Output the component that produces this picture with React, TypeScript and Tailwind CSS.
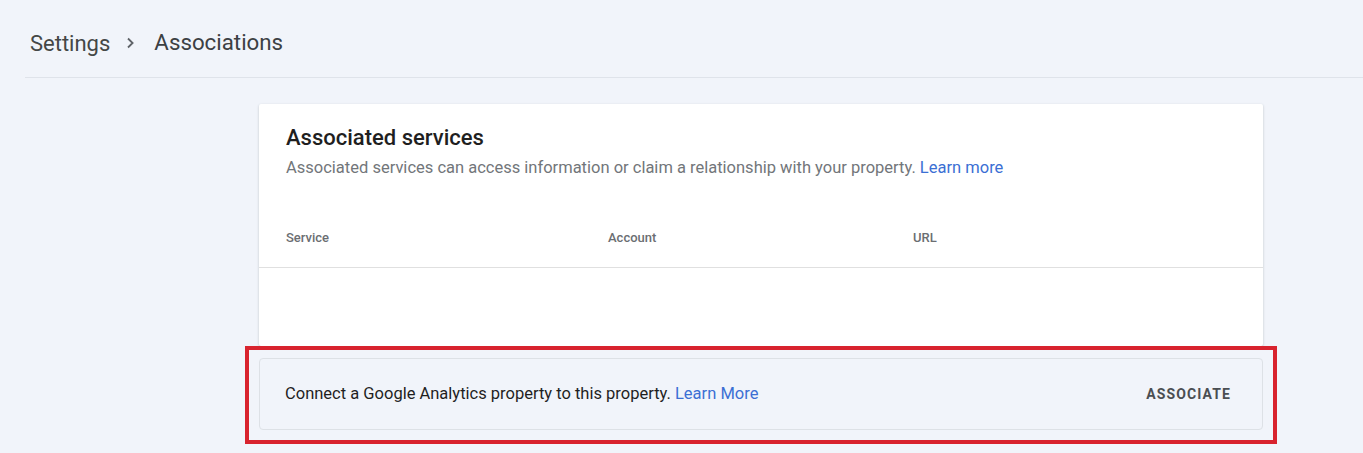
import React from "react";

export default function App() {
  return (
    <div
      className="min-h-[453px] w-full bg-[#f1f4fa] text-[#1f1f1f]"
      style={{ fontFamily: "Roboto, 'Noto Sans', Arial, sans-serif" }}
    >
      <div className="ml-[25px] flex h-[78px] items-center border-b border-[#dfe3ea] pl-[5px] pt-[9px]">
        <span className="text-[22px] text-[#444746]">Settings</span>
        <svg className="ml-[9px] mr-[11px]" width="24" height="24" viewBox="0 0 24 24">
          <path d="M9 7.5 13.6 12 9 16.5" fill="none" stroke="#5f6368" strokeWidth="1.8" />
        </svg>
        <span className="text-[22.3px] text-[#3c4043]">Associations</span>
      </div>

      <div className="ml-[259px] mt-[26px] w-[1004px]">
        <div className="h-[242px] rounded-[2px] bg-white shadow-[0_1px_3px_rgba(60,64,67,0.18),0_1px_2px_rgba(60,64,67,0.1)]">
          <div className="px-[27px] pt-[20px]">
            <h2 className="text-[22px] font-medium leading-[28px] text-[#1f1f1f]">Associated services</h2>
            <p className="mt-[4px] text-[16.5px] leading-[24px] text-[#72767a]">
              Associated services can access information or claim a relationship with your property.{" "}
              <span className="text-[#3b6fd4]">Learn more</span>
            </p>
          </div>
          <div className="mt-[28px] flex h-[60px] items-center border-b border-[#e0e0e0] px-[27px] text-[13px] font-medium text-[#6b6e72]">
            <span className="w-[322px]">Service</span>
            <span className="w-[305px]">Account</span>
            <span>URL</span>
          </div>
        </div>

        <div className="relative mt-[12px]">
          <div className="flex h-[72px] items-center justify-between rounded-[4px] border border-[#dde1e6] bg-[#f1f4fa] pl-[25px] pr-[31px]">
            <span className="text-[16.5px] text-[#1f1f1f]">
              Connect a Google Analytics property to this property.{" "}
              <span className="text-[#3b6fd4]">Learn More</span>
            </span>
            <span className="text-[14px] font-bold tracking-[0.08em] text-[#4a4e52]">ASSOCIATE</span>
          </div>
          <div className="pointer-events-none absolute left-[-14px] top-[-12px] h-[98px] w-[1032px] border-[4px] border-[#d8232e]" />
        </div>
      </div>
    </div>
  );
}
